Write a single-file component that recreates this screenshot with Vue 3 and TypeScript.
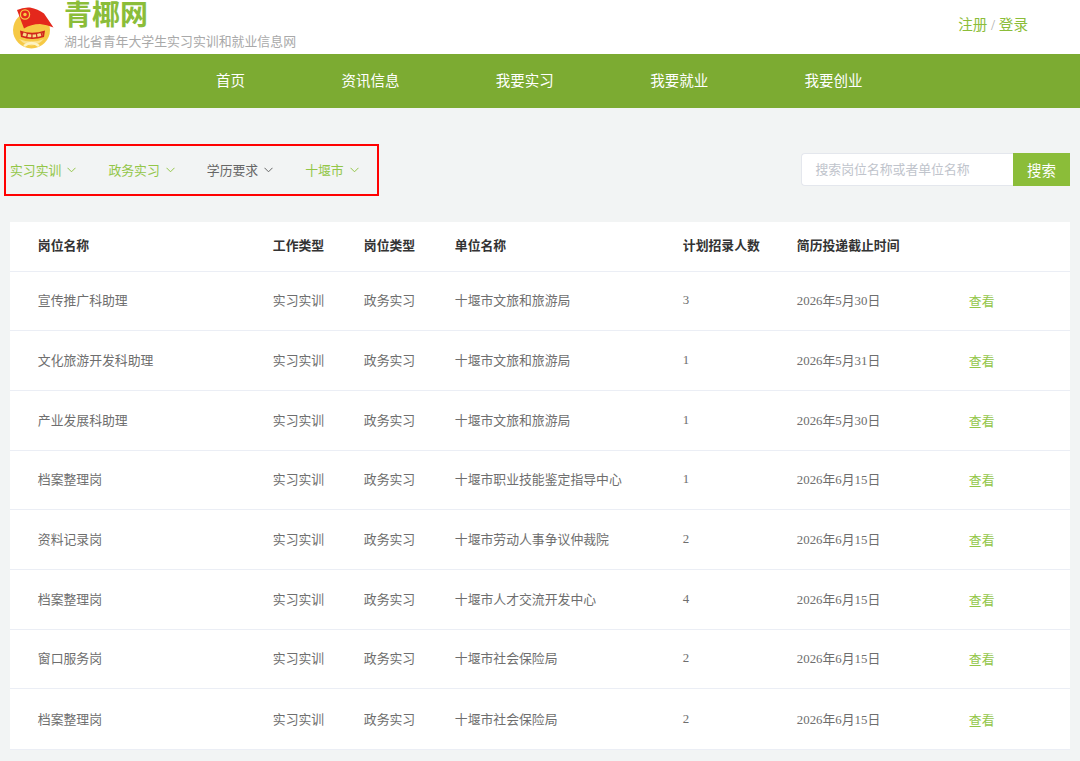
<script setup lang="ts">
interface Job {
  name: string
  unit: string
  count: number
  deadline: string
}

const navs = ['首页', '资讯信息', '我要实习', '我要就业', '我要创业']

const filters = [
  { label: '实习实训', active: true },
  { label: '政务实习', active: true },
  { label: '学历要求', active: false },
  { label: '十堰市', active: true },
]

const jobs: Job[] = [
  { name: '宣传推广科助理', unit: '十堰市文旅和旅游局', count: 3, deadline: '2026年5月30日' },
  { name: '文化旅游开发科助理', unit: '十堰市文旅和旅游局', count: 1, deadline: '2026年5月31日' },
  { name: '产业发展科助理', unit: '十堰市文旅和旅游局', count: 1, deadline: '2026年5月30日' },
  { name: '档案整理岗', unit: '十堰市职业技能鉴定指导中心', count: 1, deadline: '2026年6月15日' },
  { name: '资料记录岗', unit: '十堰市劳动人事争议仲裁院', count: 2, deadline: '2026年6月15日' },
  { name: '档案整理岗', unit: '十堰市人才交流开发中心', count: 4, deadline: '2026年6月15日' },
  { name: '窗口服务岗', unit: '十堰市社会保险局', count: 2, deadline: '2026年6月15日' },
  { name: '档案整理岗', unit: '十堰市社会保险局', count: 2, deadline: '2026年6月15日' },
]
</script>

<template>
  <div class="page">
    <header class="top">
      <div class="brand">
        <svg class="logo" width="41" height="46" viewBox="0 0 41 46">
          <circle cx="18.5" cy="26" r="18.5" fill="#f6c945" />
          <path d="M6 35 Q18.5 48 31 35 Q18.5 40 6 35 Z" fill="#fbe28e" />
          <path d="M11 42 Q18.5 36 26 42" fill="none" stroke="#fdf3c4" stroke-width="2.5" />
          <path d="M4 6 Q10 3 17 3.5 Q25 5 31 9.500 L40.500 23.500 Q34 20.500 27 20 Q18 20 11 24.500 Z" fill="#e4281c" />
          <circle cx="12" cy="10.500" r="4.600" fill="none" stroke="#f6c945" stroke-width="1.300" />
          <circle cx="12" cy="10.500" r="1.700" fill="#f6c945" />
          <path d="M7 26.500 Q19 31 32 26.500 L31 33 Q19 37 8 33 Z" fill="#d0241c" />
          <path d="M10 30 Q19 33.800 29.500 30" fill="none" stroke="#f8dc84" stroke-width="3" stroke-dasharray="3.600 1.300" />
        </svg>
        <div class="brand-text">
          <div class="brand-name">青椰网</div>
          <div class="brand-sub">湖北省青年大学生实习实训和就业信息网</div>
        </div>
      </div>
      <div class="auth"><span>注册</span> <i>/</i> <span>登录</span></div>
    </header>

    <nav class="nav">
      <a v-for="n in navs" :key="n" class="nav-item">{{ n }}</a>
    </nav>

    <section class="toolbar">
      <div class="filters">
        <div v-for="f in filters" :key="f.label" :class="['filter', f.active ? 'on' : '']">
          <span>{{ f.label }}</span>
          <svg class="arrow" width="9" height="6" viewBox="0 0 9 6"><path d="M.5.8 4.5 4.8 8.5.8" fill="none" stroke="currentColor" stroke-width="1" /></svg>
        </div>
      </div>
      <div class="search">
        <div class="search-input">搜索岗位名称或者单位名称</div>
        <button class="search-btn">搜索</button>
      </div>
    </section>

    <section class="table">
      <div class="row head">
        <div>岗位名称</div>
        <div>工作类型</div>
        <div>岗位类型</div>
        <div>单位名称</div>
        <div>计划招录人数</div>
        <div>简历投递截止时间</div>
        <div></div>
      </div>
      <div v-for="(job, i) in jobs" :key="i" class="row">
        <div>{{ job.name }}</div>
        <div>实习实训</div>
        <div>政务实习</div>
        <div>{{ job.unit }}</div>
        <div class="count">{{ job.count }}</div>
        <div>{{ job.deadline }}</div>
        <div class="view">查看</div>
      </div>
    </section>
  </div>
</template>

<style>
html, body {
  margin: 0;
  background: #f2f4f4;
}
</style>

<style scoped>
.page {
  height: 761px;
  overflow: hidden;
  background: #f2f4f4;
  font-family: "Liberation Serif", "Noto Sans CJK SC", serif;
  color: #666;
}

.top {
  height: 54px;
  background: #fff;
  display: flex;
  justify-content: space-between;
  padding: 0 52px 0 13px;
}

.brand {
  display: flex;
  gap: 10px;
}

.logo {
  margin-top: 4px;
}

.brand-text {
  display: flex;
  flex-direction: column;
  align-items: flex-start;
}

.brand-name {
  font-size: 28px;
  line-height: 32px;
  font-weight: 700;
  color: #8bbd39;
}

.brand-sub {
  margin-top: 1px;
  font-size: 12.9px;
  line-height: 18px;
  color: #a9a9a9;
}

.auth {
  font-size: 14.6px;
  line-height: 50px;
  color: #8bbd39;
}

.auth i {
  font-style: normal;
  color: #aaa;
}

.nav {
  height: 53.5px;
  background: #7cab32;
  display: flex;
  gap: 96.4px;
  padding: 0 0 2px 216px;
  box-sizing: border-box;
  align-items: center;
}

.nav-item {
  font-size: 14.5px;
  color: #fff;
}

.toolbar {
  height: 114.5px;
  display: flex;
  justify-content: space-between;
  align-items: flex-start;
  padding: 36.5px 10px 0 4px;
  box-sizing: border-box;
}

.filters {
  width: 375px;
  height: 52px;
  box-sizing: border-box;
  border: 2px solid #f00;
  display: flex;
  align-items: center;
  gap: 32px;
  padding: 0 0 2px 4px;
}

.filter {
  display: flex;
  align-items: center;
  gap: 6px;
  font-size: 12.85px;
  color: #666;
}

.filter.on {
  color: #93c648;
}

.arrow {
  margin-top: 1px;
}

.search {
  display: flex;
  margin-top: 8.5px;
}

.search-input {
  width: 212px;
  height: 33px;
  box-sizing: border-box;
  padding-left: 13.5px;
  background: #fff;
  border: 1px solid #e4e7ed;
  border-right: 0;
  border-radius: 4px 0 0 4px;
  font-size: 12.85px;
  line-height: 32px;
  color: #c0c4cc;
}

.search-btn {
  width: 57px;
  height: 33px;
  padding: 0;
  border: 0;
  background: #8bbd39;
  color: #fff;
  font-family: inherit;
  font-size: 14.5px;
}

.table {
  margin-left: 10px;
  width: 1060px;
  background: #fff;
  border-bottom: 1px solid #ebeef5;
  box-sizing: border-box;
}

.row {
  display: grid;
  grid-template-columns: 235px 91px 91px 228px 114px 172px 1fr;
  align-items: center;
  height: 59.7px;
  box-sizing: border-box;
  padding: 0 0 2px 27.8px;
  border-bottom: 1px solid #ebeef5;
  font-size: 12.85px;
  color: #6e6e6e;
}

.row:last-child {
  border-bottom: 0;
}

.row.head {
  height: 49.5px;
  padding-bottom: 3px;
  font-weight: 700;
  color: #333;
}

.count {
  padding-top: 2px;
}

.view {
  padding-top: 2px;
  color: #93c648;
}
</style>
